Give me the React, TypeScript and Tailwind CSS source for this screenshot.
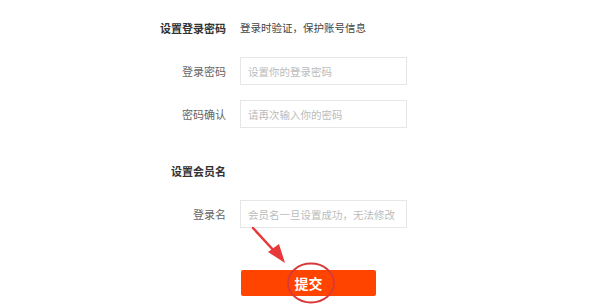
import React from "react";

const fontStack = "font-['Noto_Sans_CJK_SC','Noto_Sans',sans-serif]";

const Field = ({ label, placeholder, className = "" }: { label: string; placeholder: string; className?: string }) => (
  <div className={`flex items-center ${className}`}>
    <div className="w-[226px] text-right text-[11px] text-[#666]">{label}</div>
    <input
      type="text"
      placeholder={placeholder}
      className="ml-[14px] h-[28px] w-[167px] border border-[#e6e6e6] bg-white px-[7px] text-[10.5px] text-[#333] outline-none placeholder:text-[#bbb]"
    />
  </div>
);

export default function App() {
  return (
    <div className={`relative h-[308px] w-[600px] overflow-hidden bg-white ${fontStack}`}>
      <div className="flex flex-col pt-[18px]">
        <div className="flex h-[20px] items-center">
          <div className="w-[226px] text-right text-[11px] font-bold text-[#333]">设置登录密码</div>
          <div className="ml-[14px] text-[10.5px] text-[#444]">登录时验证，保护账号信息</div>
        </div>
        <Field label="登录密码" placeholder="设置你的登录密码" className="mt-[19px]" />
        <Field label="密码确认" placeholder="请再次输入你的密码" className="mt-[15px]" />
        <div className="mt-[33px] flex h-[20px] items-center">
          <div className="w-[226px] text-right text-[11px] font-bold text-[#333]">设置会员名</div>
        </div>
        <Field label="登录名" placeholder="会员名一旦设置成功，无法修改" className="mt-[19px]" />
        <div className="mt-[42px] flex">
          <button className="ml-[241px] flex h-[26px] w-[135px] items-center justify-center rounded-[2px] bg-[#ff4400] text-[14px] font-bold text-white">
            提交
          </button>
        </div>
      </div>

      <svg className="pointer-events-none absolute left-0 top-0" width="600" height="308" viewBox="0 0 600 308">
        <line x1="253" y1="228" x2="276" y2="253" stroke="#e8393a" strokeWidth="2.5" strokeLinecap="round" />
        <polygon points="285,263 268,252 279,244" fill="#e8393a" />
        <ellipse cx="311" cy="283" rx="23" ry="19.5" fill="none" stroke="#d9383a" strokeWidth="1.8" />
      </svg>
    </div>
  );
}
